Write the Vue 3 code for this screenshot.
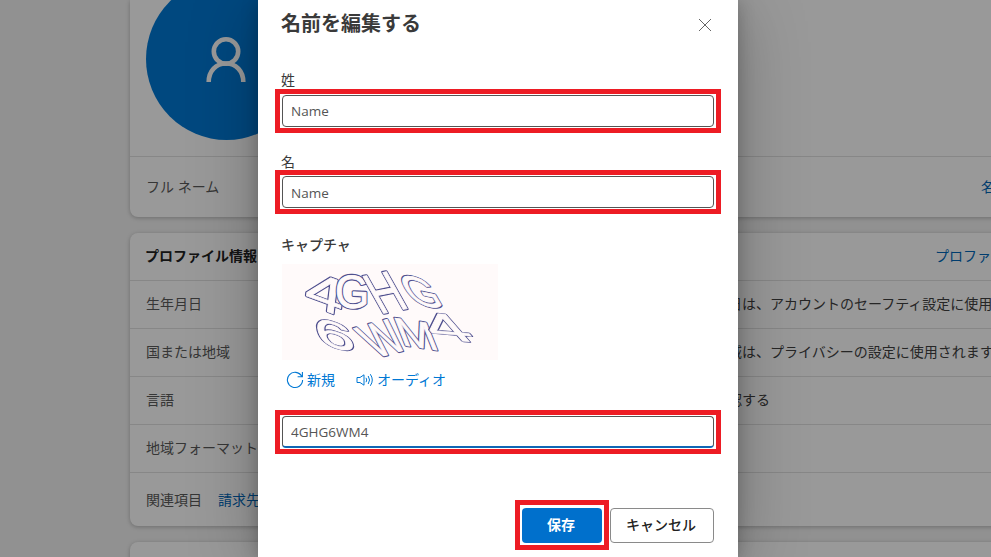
<script setup>
import { ref } from 'vue'

const surname = ref('Name')
const givenName = ref('Name')
const answer = ref('4GHG6WM4')

const rows = [
  { label: '生年月日', note: '生年月日は、アカウントのセーフティ設定に使用されます' },
  { label: '国または地域', note: '国と地域は、プライバシーの設定に使用されます' },
  { label: '言語', note: '言語を確認する' },
  { label: '地域フォーマット', note: '' },
]

const glyphs = [
  { c: '4', m: 'matrix(1.35 .5 -.12 .98 22 39)' },
  { c: 'G', m: 'matrix(.88 .04 0 .93 53 43)' },
  { c: 'H', m: 'matrix(.85 -.17 .6 1.07 98 50)' },
  { c: 'G', m: 'matrix(.9 .18 .5 .86 130 39)' },
  { c: '6', m: 'matrix(1.42 .38 .2 .78 36 79)' },
  { c: 'W', m: 'matrix(.72 -.2 .66 .85 94 94)' },
  { c: 'M', m: 'matrix(.93 .14 .32 .8 120 81)' },
  { c: '4', m: 'matrix(1.55 .13 .7 .8 154 75)' },
]
</script>

<template>
  <div class="page">
    <main class="content">
      <section class="card">
        <div class="hero">
          <div class="avatar">
            <svg width="42" height="46" viewBox="0 0 42 46" fill="none" stroke="#fff" stroke-width="4.6">
              <circle cx="21" cy="14.5" r="12.2" />
              <path d="M3.7 45C3.7 34 11 26.5 21 26.5S38.3 34 38.3 45" />
            </svg>
          </div>
        </div>
        <div class="row name-row">
          <span>フル ネーム</span>
          <a>名前を編集する</a>
        </div>
      </section>
      <section class="card">
        <div class="row head">
          <b>プロファイル情報</b>
          <a>プロファイル情報を編集する</a>
        </div>
        <div v-for="r in rows" :key="r.label" class="row">
          <span class="label">{{ r.label }}</span>
          <span class="note" :class="{ near: r.label === '言語' }">{{ r.note }}</span>
        </div>
        <div class="row related"><span>関連項目</span><a>請求先と出荷先の住所</a></div>
      </section>
      <section class="card last"></section>
    </main>

    <div class="overlay">
      <div class="dialog">
        <header>
          <h1>名前を編集する</h1>
          <svg class="close" width="14" height="14" viewBox="0 0 14 14" stroke="#666" stroke-width="1">
            <path d="M1 1l12 12M13 1L1 13" />
          </svg>
        </header>
        <label class="field">姓</label>
        <div class="mark"><input v-model="surname" /></div>
        <label class="field second">名</label>
        <div class="mark"><input v-model="givenName" class="given" /></div>
        <label class="captcha-label">キャプチャ</label>
        <svg class="captcha" width="216" height="96" viewBox="0 0 216 96">
          <g v-for="(g, i) in glyphs" :key="i" :transform="g.m">
            <text class="edge">{{ g.c }}</text>
            <text class="body" aria-hidden="true">{{ g.c }}</text>
          </g>
        </svg>
        <div class="tools">
          <a>
            <svg width="18" height="18" viewBox="0 0 18 18" fill="none" stroke="currentColor" stroke-width="1.1">
              <path d="M15.7 5.3A7.6 7.6 0 1 0 16.6 9M16.4 1v4.8h-4.8" />
            </svg>
            新規
          </a>
          <a>
            <svg width="18" height="16" viewBox="0 0 18 16" fill="none" stroke="currentColor" stroke-width="1">
              <path d="M1 5.5h3L8 2.8v10.4L4 10.5H1zM10 5.8q1.5 2.2 0 4.4M12.2 4q2.7 4 0 8M14.3 2.2q4 5.8 0 11.6" />
            </svg>
            オーディオ
          </a>
        </div>
        <div class="mark"><input v-model="answer" class="active" /></div>
        <footer>
          <div class="save-mark"><button class="save">保存</button></div>
          <button class="cancel">キャンセル</button>
        </footer>
      </div>
    </div>
  </div>
</template>

<style>
body {
  margin: 0;
  overflow: hidden;
}
</style>

<style scoped>
* {
  box-sizing: border-box;
}
.page {
  position: relative;
  width: 991px;
  height: 557px;
  overflow: hidden;
  background: #f2f2f2;
  font: 14px/20px "Open Sans", "Noto Sans CJK JP", sans-serif;
  color: #5a5a5a;
}
.content {
  display: flex;
  flex-direction: column;
  gap: 16px;
  padding-left: 130px;
  width: 1250px;
}
.card {
  background: #fff;
  border-radius: 0 0 8px 8px;
  box-shadow: 0 1px 4px rgba(0, 0, 0, 0.25);
}
.card + .card {
  border-radius: 8px;
}
.hero {
  height: 156px;
  padding-left: 16px;
  overflow: hidden;
}
.avatar {
  display: flex;
  align-items: center;
  justify-content: center;
  width: 161px;
  height: 162px;
  margin-top: -22px;
  border-radius: 50%;
  background: #0078d4;
}
.avatar svg {
  margin: 2px 1px 0 0;
}
.row {
  display: flex;
  align-items: center;
  height: 48px;
  padding: 0 0 2px 16px;
  border-top: 1px solid #e1e1e1;
  white-space: nowrap;
}
.row > * {
  flex: none;
}
.head {
  height: 47px;
  border-top: 0;
}
.head b {
  width: 789px;
  margin-left: -1px;
  color: #222;
}
.head a {
  margin-left: 1px;
}
.name-row {
  height: 61px;
  padding-bottom: 0;
}
.name-row span {
  width: 835px;
}
a {
  color: #0067b8;
}
.label {
  width: 540px;
}
.note {
  color: #404040;
}
.near {
  margin-left: -14px;
}
.related {
  height: 54px;
  padding-bottom: 0;
}
.related span {
  width: 72px;
}
.last {
  height: 60px;
}
.overlay {
  position: absolute;
  inset: 0;
  display: flex;
  justify-content: center;
  padding-left: 5px;
  background: rgba(0, 0, 0, 0.4);
}
.dialog {
  width: 480px;
  height: 557px;
  padding: 0 24px;
  background: #fff;
  box-shadow: 0 10px 64px rgba(0, 0, 0, 0.27), 0 2px 16px rgba(0, 0, 0, 0.22);
  color: #3a3a3a;
}
header {
  display: flex;
  justify-content: space-between;
  height: 70px;
}
h1 {
  margin: 10px 0 0 -1px;
  font-size: 20px;
  line-height: 28px;
  font-weight: 700;
}
.close {
  margin: 18px 2px 0 0;
}
.field {
  display: block;
  height: 19px;
  margin-left: -1px;
}
.second {
  height: 18px;
  margin-top: 19px;
}
.mark {
  height: 44px;
  margin: 0 -7px;
  padding: 1px 2px;
  border: 5px solid #ed1c24;
}
input {
  display: block;
  width: 432px;
  height: 32px;
  padding: 0 8px;
  border: 1px solid #555;
  border-radius: 4px;
  outline: 0;
  background: #fff;
  font: 13.5px "Open Sans", sans-serif;
  color: #555;
}
.given {
  padding-top: 2px;
}
.active {
  border-bottom: 2px solid #0f67b5;
}
.captcha-label {
  display: block;
  height: 29px;
  margin: 21px 0 0 -1px;
  font-weight: 500;
}
.captcha {
  display: block;
  background: #fffafa;
}
.captcha text {
  font: 50px "Liberation Sans", sans-serif;
  fill: #fffafa;
  stroke-linejoin: round;
  vector-effect: non-scaling-stroke;
}
.captcha .edge {
  stroke: #50508f;
  stroke-width: 3px;
}
.captcha .body {
  stroke: #fffafa;
  stroke-width: 0.8px;
}
.tools {
  display: flex;
  gap: 21px;
  height: 50px;
  padding: 10px 0 0 4px;
}
.tools a {
  display: flex;
  align-items: center;
  gap: 3px;
  height: 20px;
  color: #0078d4;
}
footer {
  display: flex;
  align-items: flex-start;
  justify-content: flex-end;
  gap: 1px;
  padding-top: 46px;
}
.save-mark {
  height: 50px;
  padding: 3px 2px 2px;
  border: 5px solid #ed1c24;
}
button {
  display: block;
  height: 35px;
  padding: 0 2px 2px 0;
  border-radius: 4px;
  font: 500 14px/20px "Open Sans", "Noto Sans CJK JP", sans-serif;
}
.save {
  width: 80px;
  border: 0;
  background: #0070cc;
  color: #fff;
  font-weight: 700;
}
.cancel {
  width: 104px;
  margin-top: 8px;
  border: 1px solid #8a8a8a;
  background: #fff;
  color: #222;
}
</style>
